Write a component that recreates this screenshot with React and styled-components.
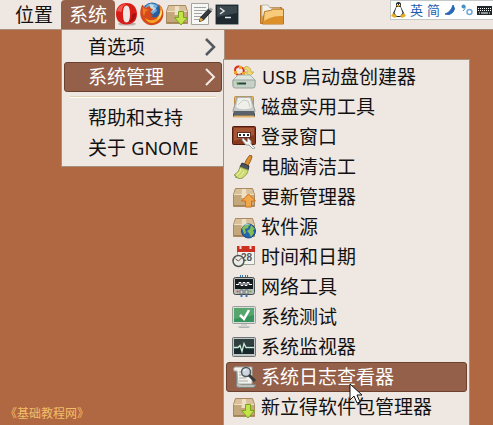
import React from 'react';
import styled, { createGlobalStyle, css } from 'styled-components';

const GlobalStyle = createGlobalStyle`
  * { box-sizing: border-box; }
  body {
    margin: 0;
    font-family: "Noto Sans CJK SC", "Noto Sans", sans-serif;
    font-size: 19px;
    color: #111;
  }
  button { font: inherit; color: inherit; border: 0; background: none; padding: 0; margin: 0; }
  ul { list-style: none; margin: 0; padding: 0; }
`;

const Desktop = styled.main`
  position: relative;
  height: 100vh;
  overflow: hidden;
  background: #b06842;
`;

const Panel = styled.header`
  display: flex;
  height: 30px;
  background: #efe7e1;
  border-bottom: 1px solid #a8917c;
`;

const MenuBar = styled.nav`
  display: flex;
  padding-left: 7px;
`;

const MenuHolder = styled.div`
  position: relative;
`;

const MenuTitle = styled.button`
  && {
    display: block;
    height: 29px;
    line-height: 26px;
    padding: 0 8px 2px;
    white-space: nowrap;
    border-radius: 4px 4px 0 0;
    ${(p) => p.$open && css`
      background: #94604a;
      color: #fff;
    `}
  }
`;

const Launchers = styled.div`
  display: flex;
  align-items: flex-start;
  padding-top: 2px;
`;

const Launcher = styled.button`
  && {
    width: 24px;
    height: 24px;
    margin-right: 1px;
    margin-left: ${(p) => (p.$apart ? 20 : 0)}px;
  }
`;

const Icon = styled.svg`
  display: block;
  flex: none;
  width: 24px;
  height: 24px;
`;

const InputBar = styled.div`
  display: flex;
  align-items: center;
  gap: 4px;
  height: 20px;
  margin-left: auto;
  background: #fff;
  border: 1px solid #c3c9c5;
  border-width: 1px 0 1px 1px;
`;

const InputMode = styled.button`
  && {
    width: 13px;
    height: 18px;
    font-size: 13px;
    line-height: 18px;
    color: #1c5cae;
  }
`;

const SmallIcon = styled.svg`
  display: block;
  flex: none;
  width: ${(p) => p.$w}px;
  height: 16px;
`;

const MenuPane = styled.ul`
  && {
    position: absolute;
    z-index: 1;
    padding: 2px 2px 3px;
    background: #efe7e1;
    border: 1px solid #a8917c;
  }
`;

const SystemMenu = styled(MenuPane)`
  top: 29px;
  left: 0;
  width: 164px;
`;

const SubMenu = styled(MenuPane)`
  top: -3px;
  left: calc(100% + 1px);
  width: 247px;
`;

const Entry = styled.li`
  position: relative;
`;

const EntryButton = styled.button`
  && {
    display: flex;
    align-items: center;
    gap: 5px;
    width: 100%;
    height: 30px;
    line-height: 26px;
    padding: 0 5px 0 ${(p) => (p.$plain ? 23 : 5)}px;
    border: 1px solid transparent;
    border-radius: 3px;
    white-space: nowrap;
    text-align: left;
    ${(p) => p.$active && css`
      background: #94604a;
      border-color: #6b412f;
      color: #fff;
    `}
  }
`;

const Label = styled.span`
  flex: 1;
  padding-bottom: 2px;
`;

const Latin = styled.span`
  margin: 0 1px;
  font-family: "Noto Sans", sans-serif;
  font-size: 18px;
`;

const Divider = styled.li`
  height: 2px;
  margin: 4px 6px 5px;
  background: #fffdf5;
  border-top: 1px solid #e3d3b4;
`;

const Chevron = styled.svg`
  flex: none;
  width: 11px;
  height: 20px;
  fill: none;
  stroke: ${(p) => (p.$active ? '#f4ebe5' : '#525860')};
  stroke-width: ${(p) => (p.$active ? 2 : 2.5)};
`;

const Credit = styled.p`
  position: absolute;
  left: 5px;
  bottom: 3px;
  margin: 0;
  font-size: 12px;
  line-height: 18px;
  color: #f4bd67;
`;

const Pointer = styled.svg`
  position: absolute;
  z-index: 2;
  left: 349px;
  top: 383px;
  width: 14px;
  height: 22px;
`;

const Opera = () => (
  <Icon viewBox="0 0 24 24">
    <ellipse cx="12" cy="22" rx="9" ry="1.6" fill="#b9ada6" />
    <path fillRule="evenodd" fill="#d91c18" d="M11.500 1C5 1 1 5.600 1 12s4 10.500 10.500 10.500S22 18.400 22 12 18 1 11.500 1Zm0 2.500C14 3.500 15 7 15 12s-1 8.500-3.500 8.500S8 17 8 12s1-8.500 3.500-8.500Z" />
    <path d="M2 9C3.500 4 7 2 11 2 7.500 3.500 7 7 6.500 10Z" fill="#f0584b" />
    <path d="M16 20c4-2 5-5 5-9l-4 1c0 4-1 6-3 8Z" fill="#aa0f12" />
  </Icon>
);

const Firefox = () => (
  <Icon viewBox="0 0 24 24">
    <circle cx="12" cy="10" r="9.500" fill="#285e9f" />
    <path d="M7 3c4-3 9-1 11 1l-2 2 1 3-4 3-3-2-4 1-2-4Z" fill="#72afd8" />
    <path d="m10 2 4 1-1 2 3 1-3 3-2-2-3 1Z" fill="#c0dced" />
    <path d="M2 3C0 8-1 14 3 19c5 6 14 5 18 0 3-4 3-9 1-13-1-2-2-3-4-4 2 4 3 8 1 11-2 3-6 3-8 1l3-1c-3 0-4-2-3-4 1-1 2-1 2-2-2 0-3-1-3-3-2 0-3 1-4 2-1 0-2-1-3-3Z" fill="#d44a1d" />
    <path d="M22 7c1 5-1 12-9 14-4 0-7-2-8-5 4 3 9 3 12 0s4-7 3-12Z" fill="#f5a422" />
    <path d="M3 5c0 3-1 6 1 9l2-5 3-1-4-1Z" fill="#ef7a24" />
    <path d="M22 9c0 4-2 7-5 9 2-3 3-6 4-10Z" fill="#ffe46a" />
  </Icon>
);

const Carton = ({ children }) => (
  <Icon viewBox="0 0 24 24">
    <path d="M3.500 3.500h17l2 6v12h-21v-12Z" fill="#c5a77c" stroke="#a98a60" />
    <path d="m4 4-2 5h20l-2-5Z" fill="#d9c19b" />
    <path d="M2 9.500h20" stroke="#efddbd" />
    <path d="M10 4h4l.5 9h-5Z" fill="#eee0c5" />
    <path d="M2 20.500h20" stroke="#a58355" />
    {children}
  </Icon>
);

const PackageDown = () => (
  <Carton><path d="M13.500 9.500h5v6h4L16 23l-6.500-7.500h4Z" fill="#c3e346" stroke="#75a51e" /></Carton>
);
const PackageUp = () => (
  <Carton><path d="m16.500 9 7 7h-4v6h-6v-6h-4Z" fill="#f2a64b" stroke="#ce711a" /></Carton>
);
const PackageGlobe = () => (
  <Carton>
    <circle cx="16.500" cy="16" r="7" fill="#2664ae" stroke="#164a85" />
    <path d="m10 13 4-4 3 1-1 3-3 1 1 4-2 1Zm9-3 4 4-2 1 1 3-3 4-2-4-2-2 3-2Z" fill="#83bd58" />
    <path d="M12 10c2-1 4-1 6 0" stroke="#a8d6ef" fill="none" />
  </Carton>
);

const Notes = () => (
  <Icon viewBox="0 0 24 24">
    <path d="M1.500 1.500h17v21h-17Z" fill="#f7f7f3" stroke="#a2a39f" />
    <path d="M4 5.500h12M4 8.500h12M4 11.500h8M4 14.500h8M4 17.500h5" stroke="#9fa3a3" />
    <path d="m18.500 7 3 2-8 9-4 1.500 1-4Z" fill="#34393d" stroke="#202629" />
    <path d="m18.500 7 2-1.500 2.500 2-1.500 2Z" fill="#a4a6a7" />
    <path d="m10.500 15.500 3 2.500-4 1.500Z" fill="#e8ae48" />
  </Icon>
);

const Terminal = () => (
  <Icon viewBox="0 0 24 24">
    <rect x=".5" y="2.500" width="23" height="20" rx="1" fill="#1f2a30" stroke="#929999" />
    <path d="M2 4h20v7L2 15Z" fill="#3a474d" />
    <path d="m5 6 4 3-4 3M10 15.500h6" stroke="#e3e6e4" fill="none" strokeWidth="1.500" />
  </Icon>
);

const Folder = () => (
  <Icon viewBox="0 0 24 24">
    <path d="M.5 3.500h7l2 2h12v16H.5Z" fill="#d99843" stroke="#b57424" />
    <path d="M2 3h6l2 3h10v8H2Z" fill="#f2f0e8" stroke="#c3bdad" />
    <path d="m4.500 9.500 6-1 2-1.500h11v15h-21Z" fill="#e8a847" stroke="#bc7423" />
    <path d="m5 10 6-1 2-1h10v7c-7 1-12 2-19 6Z" fill="#f6cc7c" />
    <path d="M3 20c6-5 12-6 20-6v8H3Z" fill="#dd8f29" />
  </Icon>
);

const UsbCreator = () => (
  <Icon viewBox="0 0 24 24">
    <path d="M9 2.500c-2-2-6-1-6 3s3 5 6 4 4-5 1-7" fill="none" stroke="#d83118" strokeWidth="2" />
    <path d="M7 1h3v3H7Zm-5 5h3v3H2Zm8 1h3v3h-3Z" fill="#f1a229" />
    <path d="M12 3c2-3 7-1 7 4h3l-4 4-5-4h3c0-2-2-3-4-3Z" fill="#edda75" stroke="#c9b451" />
    <path d="m4 12 2-2h12l2 2 3 3v6H1v-6Z" fill="#dfe6df" stroke="#a6b3aa" />
    <path d="M1 15h22v6q0 2-2 2H3q-2 0-2-2Z" fill="#c7d1c8" stroke="#96a49b" />
    <path d="M5 18.500h9" stroke="#234833" strokeWidth="2" /><path d="M4 18h3" stroke="#73b765" />
  </Icon>
);

const DiskUtility = () => (
  <Icon viewBox="0 0 24 24">
    <rect x="2.500" y="1.500" width="19" height="13" rx="1" fill="#e8b965" stroke="#c78d37" />
    <path d="M1 15h22v7H1Z" fill="#3e4852" />
    <path d="M1.500 21.500h21" stroke="#e3b36a" strokeWidth="2" />
    <path d="m5 2-4 14q0 3 3 3h16q3 0 3-3L19 2Z" fill="#c8cac7" stroke="#999f9d" />
    <path d="m6 3-2 9c2 3 14 3 16 0l-2-9Z" fill="#f0f0eb" />
    <path d="M2 16h20v4H2Z" fill="#59616a" />
    <path d="m6 10 5-5 5 1 2 6" stroke="#cbcbc6" fill="none" />
  </Icon>
);

const LoginWindow = () => (
  <Icon viewBox="0 0 24 24">
    <rect x=".5" y="1.500" width="23" height="18" rx="1" fill="#86391f" stroke="#521c0e" />
    <path d="M2 3h20v7L2 16Z" fill="#a65535" />
    <rect x="5.500" y="7.500" width="13" height="5" fill="#fff" stroke="#622e1d" />
    <path d="M7 9h2v2H7Zm4 0h2v2h-2Zm4 0h2v2h-2Z" fill="#252b2b" />
    <path d="m11 13 4 4 1-4 3 3v3l4 4-2 1-4-4h-3l-4-5Z" fill="#f2f4f1" stroke="#9da3a0" />
  </Icon>
);

const Broom = () => (
  <Icon viewBox="0 0 24 24">
    <path d="m18 0 2 1c0 3-3 8-5 11l-3-1C13 7 15 3 18 0Z" fill="#dc8f31" stroke="#9b5a1e" />
    <path d="m10 8 7 3-1 4-8-3Z" fill="#4d5660" stroke="#293039" />
    <path d="m8 12 8 3c0 4-4 7-7 9l-6-2 2-1-3-1C5 18 7 16 8 12Z" fill="#cddb73" stroke="#91a04b" />
    <path d="M9 14c-1 4-3 5-5 7m8-5c-1 3-3 5-5 6" stroke="#f0f0a7" fill="none" />
  </Icon>
);

const Calendar = () => (
  <Icon viewBox="0 0 24 24">
    <path d="M5.500 2.500h17v17h-17Z" fill="#f4f4ef" stroke="#a1a39d" />
    <path d="M5 1h18v6H5Z" fill="#cb3021" /><path d="M8.500 0v4M18.500 0v4" stroke="#f8dbd6" strokeWidth="2" />
    <text x="9" y="16" fontFamily="Liberation Sans" fontWeight="bold" fontSize="10" fill="#54585a">28</text>
    <circle cx="6.500" cy="16" r="5.500" fill="#e9ece7" stroke="#4d5450" strokeWidth="1.500" />
    <path d="m3.500 14 3 2 3-3" fill="none" stroke="#714a3c" />
  </Icon>
);

const NetworkTools = () => (
  <Icon viewBox="0 0 24 24">
    <path d="M8.500 0v3M10.500 0v3M13.500 0v3M15.500 0v3" stroke="#3475b4" />
    <rect x="1.500" y="2.500" width="21" height="17" rx="2" fill="#b7bbba" stroke="#444a4b" />
    <path d="M3 4h18v10H3Z" fill="#161b1d" />
    <path d="M4 9.500h3v-2h2v3h2v-3h2v3h2v-3h2v2h3" fill="none" stroke="#fff" />
    <path d="M8 15h3v4H8Zm5 0h3v4h-3Z" fill="#d5d8d7" stroke="#6c7374" />
    <circle cx="5.500" cy="16.500" r="1" fill="#cf4632" /><circle cx="18.500" cy="16.500" r="1" fill="#6da748" />
    <path d="M9.500 20v2m5-2v2" stroke="#3475b4" strokeWidth="2" />
  </Icon>
);

const TestMonitor = () => (
  <Icon viewBox="0 0 24 24">
    <ellipse cx="12" cy="22" rx="6" ry="1" fill="#abb1ad" /><path d="M9 19h6v3H9Z" fill="#cfd3d0" />
    <rect x=".5" y="1.500" width="23" height="17" rx="1" fill="#d8dbd9" stroke="#9aa19d" />
    <path d="M2 3h20v14H2Z" fill="#36935b" /><path d="M2 3h20v7L2 14Z" fill="#55a76e" />
    <path d="m8 10 4 4 5-9" fill="none" stroke="#fff" strokeWidth="2.500" />
  </Icon>
);

const SystemMonitor = () => (
  <Icon viewBox="0 0 24 24">
    <rect x=".5" y="2.500" width="23" height="19" rx="1" fill="#c2c5c5" stroke="#6e7475" />
    <path d="M2 4h20v15H2Z" fill="#17292a" /><path d="M2 4h20v6L2 14Z" fill="#30403f" />
    <path d="M2 12.500h4l2-2 2 6 2-8 2 4h8" fill="none" stroke="#c7eadb" strokeWidth="1.300" />
  </Icon>
);

const LogViewer = () => (
  <Icon viewBox="0 0 24 24">
    <path d="M4.500 2.500v18q0 2 3 2h13q3 0 3-3H9l-2-2 1-15" fill="#bec0be" stroke="#7e827e" />
    <path d="M3 2h17v17H6L5 6H2q-1-4 1-4Z" fill="#f3f3ee" stroke="#a5a9a4" />
    <path d="M7 7h4M7 10h3M7 13h7M7 16h9" stroke="#a8aaa7" />
    <circle cx="14" cy="7" r="4.500" fill="#cbd6df" stroke="#51585b" strokeWidth="1.500" />
    <path d="m17 10 6 6" stroke="#353b3d" strokeWidth="3" /><path d="m11.500 6 3-2" stroke="#fff" />
  </Icon>
);

const Penguin = () => (
  <SmallIcon $w={15} viewBox="0 0 15 16">
    <path d="M5 5V2q0-2 2.500-2T10 2v3l3 6v4H2v-4Z" fill="#242b31" />
    <path d="M5.500 5h4l2 6-2 3h-4l-2-3Z" fill="#fff" />
    <path d="M5 3h5L7.500 5Zm-3 8 4 3-2 2-4-2Zm11 0 2 3-4 2-2-2Z" fill="#e5ac28" />
    <path d="M6 2h1v1H6Zm2 0h1v1H8Z" fill="#fff" />
  </SmallIcon>
);
const Moon = () => (
  <SmallIcon $w={13} viewBox="0 0 13 16">
    <path d="M9 3q3 4 0 7-3 4-8 2 6-2 8-9Z" fill="#2868b6" stroke="#2868b6" />
  </SmallIcon>
);
const Punctuation = () => (
  <SmallIcon $w={12} viewBox="0 0 12 16">
    <circle cx="2.500" cy="4.500" r="2" fill="#4690c7" /><path d="M4 4q1 3-2 5" stroke="#4690c7" fill="none" />
    <circle cx="8.500" cy="10" r="2.500" fill="none" stroke="#72a9d3" strokeWidth="1.500" />
  </SmallIcon>
);
const Keyboard = () => (
  <SmallIcon $w={16} viewBox="0 0 16 16">
    <path d="M0 4h15v9H0Z" fill="#20282c" />
    <path d="M1 6.500h13M1 8.500h13" stroke="#fff" strokeDasharray="1 1" />
    <path d="M2 11h1m1 0h7m1 0h1" stroke="#fff" />
  </SmallIcon>
);

const launchers = [
  ['Opera', Opera], ['Firefox', Firefox], ['新立得软件包管理器', PackageDown],
  ['文本编辑器', Notes], ['终端', Terminal], ['文件夹', Folder],
];

const adminEntries = [
  [<><Latin>USB</Latin> 启动盘创建器</>, UsbCreator],
  ['磁盘实用工具', DiskUtility],
  ['登录窗口', LoginWindow],
  ['电脑清洁工', Broom],
  ['更新管理器', PackageUp],
  ['软件源', PackageGlobe],
  ['时间和日期', Calendar],
  ['网络工具', NetworkTools],
  ['系统测试', TestMonitor],
  ['系统监视器', SystemMonitor],
  ['系统日志查看器', LogViewer, true],
  ['新立得软件包管理器', PackageDown],
];

const Arrow = ({ active }) => (
  <Chevron $active={active} viewBox="0 0 11 20"><path d="m1 2 8 8-8 8" /></Chevron>
);

export default function App() {
  return (
    <Desktop>
      <GlobalStyle />
      <Panel>
        <MenuBar>
          <MenuTitle>位置</MenuTitle>
          <MenuHolder>
            <MenuTitle $open aria-expanded="true">系统</MenuTitle>
            <SystemMenu>
              <Entry><EntryButton $plain><Label>首选项</Label><Arrow /></EntryButton></Entry>
              <Entry>
                <EntryButton $plain $active aria-expanded="true"><Label>系统管理</Label><Arrow active /></EntryButton>
                <SubMenu>
                  {adminEntries.map(([label, Glyph, active], i) => (
                    <Entry key={i}>
                      <EntryButton $active={active}><Glyph /><Label>{label}</Label></EntryButton>
                    </Entry>
                  ))}
                </SubMenu>
              </Entry>
              <Divider role="separator" />
              <Entry><EntryButton $plain><Label>帮助和支持</Label></EntryButton></Entry>
              <Entry><EntryButton $plain><Label>关于 <Latin>GNOME</Latin></Label></EntryButton></Entry>
            </SystemMenu>
          </MenuHolder>
        </MenuBar>
        <Launchers>
          {launchers.map(([name, Glyph]) => (
            <Launcher key={name} aria-label={name} $apart={Glyph === Folder}><Glyph /></Launcher>
          ))}
        </Launchers>
        <InputBar>
          <Penguin />
          <InputMode>英</InputMode>
          <InputMode>简</InputMode>
          <Moon />
          <Punctuation />
          <Keyboard />
        </InputBar>
      </Panel>
      <Credit>《基础教程网》</Credit>
      <Pointer viewBox="0 0 14 22">
        <path d="M1 1v16l4-4 3 7 3-1-3-7h5Z" fill="#fff" stroke="#111" />
      </Pointer>
    </Desktop>
  );
}
